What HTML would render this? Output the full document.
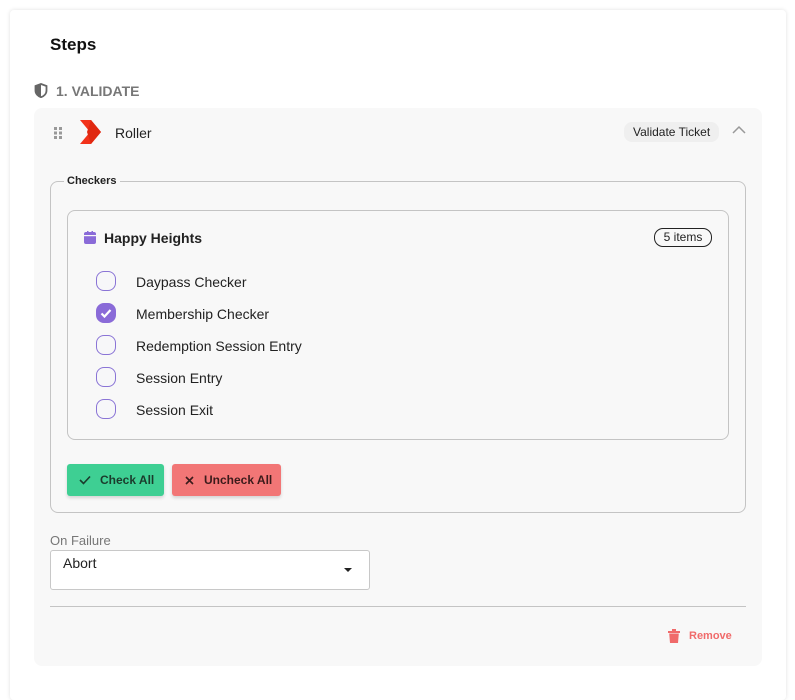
<!DOCTYPE html><html><head><style>
body{margin:0;width:795px;height:680px;background:#fff;font-family:"Liberation Sans",sans-serif;position:relative;overflow:hidden;color:#222}
.a{position:absolute}
.card{left:10px;top:10px;width:776px;height:690px;background:#fff;box-shadow:0 0 4px rgba(0,0,0,.12);border-radius:4px}
.cb{width:20px;height:20px;border:1.5px solid #8a74d6;border-radius:8px;box-sizing:border-box;background:#f7f7f9}
.lbl{font-size:14px;color:#222}
</style></head><body>
<div class="a card"></div>
<div class="a" style="left:50px;top:35px;font-size:17px;font-weight:bold;color:#111">Steps</div>
<svg class="a" style="left:34px;top:83px" width="14" height="15" viewBox="0 0 14 15"><path d="M7 1L1.5 3v4.5c0 3.3 2.4 5.7 5.5 6.7 3.1-1 5.5-3.4 5.5-6.7V3z" fill="none" stroke="#666" stroke-width="1.8"/><path d="M7 1v13.2c-3.1-1-5.5-3.4-5.5-6.7V3z" fill="#666"/></svg>
<div class="a" style="left:56px;top:83px;font-size:14px;font-weight:bold;color:#777">1. VALIDATE</div>
<div class="a" style="left:34px;top:108px;width:728px;height:558px;background:#f8f8f8;border-radius:8px"></div>
<svg class="a" style="left:53px;top:126px" width="10" height="13"><g fill="#999"><rect x="1" y="1" width="3" height="3"/><rect x="6" y="1" width="3" height="3"/><rect x="1" y="5.5" width="3" height="3"/><rect x="6" y="5.5" width="3" height="3"/><rect x="1" y="10" width="3" height="3"/><rect x="6" y="10" width="3" height="3"/></g></svg>
<svg class="a" style="left:80px;top:120px" width="22" height="24"><path d="M0 0h11l10 12-10 12H0l10-12z" fill="#f2321a"/><path d="M11 0l10 12-10 12 -4-12z" fill="#e02810"/></svg>
<div class="a lbl" style="left:115px;top:125px">Roller</div>
<div class="a" style="left:624px;top:122px;height:20px;padding:0 9px;line-height:20px;background:#efefef;border-radius:8px;font-size:12px">Validate Ticket</div>
<svg class="a" style="left:732px;top:125px" width="14" height="9"><path d="M1 8L7 2l6 6" fill="none" stroke="#999" stroke-width="1.5"/></svg>
<div class="a" style="left:50px;top:181px;width:694px;height:330px;border:1px solid #c4c4c4;border-radius:8px"></div>
<div class="a" style="left:64px;top:175px;padding:0 3px;background:#f8f8f8;font-size:11px;font-weight:bold">Checkers</div>
<div class="a" style="left:67px;top:210px;width:660px;height:228px;border:1px solid #c4c4c4;border-radius:8px"></div>
<svg class="a" style="left:84px;top:231px" width="12" height="13"><rect x="0" y="1" width="12" height="12" rx="2" fill="#8a6bd8"/><rect x="0" y="4" width="12" height="1.2" fill="#f8f8f8"/><rect x="3" y="0" width="1.5" height="3" fill="#8a6bd8"/><rect x="7.5" y="0" width="1.5" height="3" fill="#8a6bd8"/></svg>
<div class="a" style="left:104px;top:230px;font-size:14px;font-weight:bold;color:#222">Happy Heights</div>
<div class="a" style="left:654px;top:228px;width:56px;height:17px;border:1px solid #222;border-radius:9px;font-size:12px;text-align:center;line-height:17px">5 items</div>
<div class="a cb" style="left:96px;top:271px"></div><div class="a lbl" style="left:136px;top:274px">Daypass Checker</div>
<div class="a cb" style="left:96px;top:303px;background:#8a6bd8;border-color:#8a6bd8"><svg width="20" height="20" style="position:absolute;left:-1.5px;top:-1.5px"><path d="M5.5 10.5l3 3L14.5 7" fill="none" stroke="#fff" stroke-width="2.2"/></svg></div><div class="a lbl" style="left:136px;top:306px">Membership Checker</div>
<div class="a cb" style="left:96px;top:335px"></div><div class="a lbl" style="left:136px;top:338px">Redemption Session Entry</div>
<div class="a cb" style="left:96px;top:367px"></div><div class="a lbl" style="left:136px;top:370px">Session Entry</div>
<div class="a cb" style="left:96px;top:399px"></div><div class="a lbl" style="left:136px;top:402px">Session Exit</div>
<div class="a" style="left:67px;top:464px;width:97px;height:32px;background:#3ecf93;border-radius:3px;box-shadow:0 2px 3px rgba(0,0,0,.15);font-size:12px;font-weight:bold;line-height:32px;color:#1b3b2c"><svg style="position:absolute;left:12px;top:11px" width="12" height="10"><path d="M1 5l3.5 3.5L11 1.5" fill="none" stroke="#1b3b2c" stroke-width="1.6"/></svg><span style="position:absolute;left:33px">Check All</span></div>
<div class="a" style="left:172px;top:464px;width:109px;height:32px;background:#f27676;border-radius:3px;box-shadow:0 2px 3px rgba(0,0,0,.15);font-size:12px;font-weight:bold;line-height:32px;color:#3b1b1b"><svg style="position:absolute;left:13px;top:12px" width="9" height="9"><path d="M1 1l7 7M8 1L1 8" stroke="#3b1b1b" stroke-width="1.6"/></svg><span style="position:absolute;left:32px">Uncheck All</span></div>
<div class="a" style="left:50px;top:533px;font-size:13px;color:#777">On Failure</div>
<div class="a" style="left:50px;top:550px;width:318px;height:38px;border:1px solid #c8c8c8;border-radius:3px;background:#fff"></div>
<div class="a" style="left:63px;top:555px;font-size:14px">Abort</div>
<svg class="a" style="left:344px;top:568px" width="8" height="5"><path d="M0 0h8L4 4z" fill="#222"/></svg>
<div class="a" style="left:50px;top:606px;width:696px;height:1px;background:#c4c4c4"></div>
<svg class="a" style="left:668px;top:629px" width="12" height="14"><path d="M0 2h12v2H0zM4 0h4v2H4zM1.2 4.5h9.6l-.8 9.5H2z" fill="#f06a6a"/></svg>
<div class="a" style="left:689px;top:630px;font-size:11px;font-weight:bold;color:#f06a6a">Remove</div>
</body></html>
